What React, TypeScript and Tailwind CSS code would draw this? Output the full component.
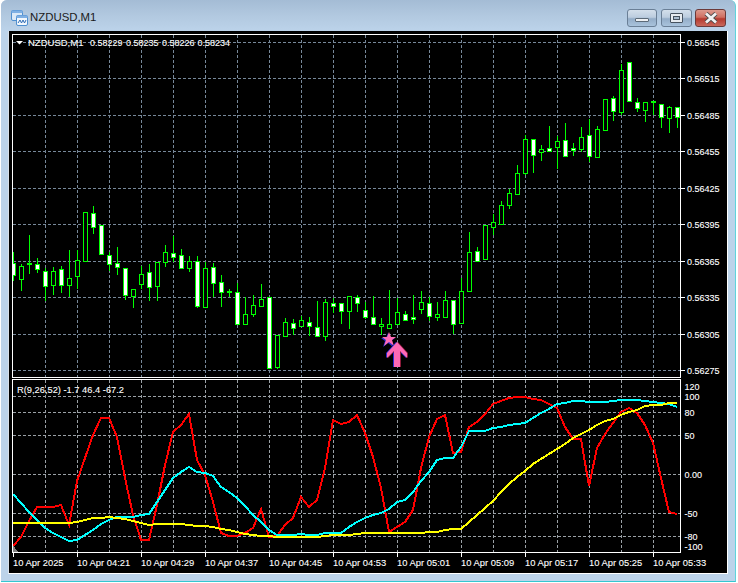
type Candle = [number, number, number, number, boolean];

// wick top, body top, body bottom, wick bottom, white body
const candles: Candle[] = [
  [252, 263, 275, 281, true], [264, 266, 279, 291, false], [235, 263, 264, 274, false], [258, 264, 269, 273, true],
  [268, 271, 286, 301, true], [267, 271, 285, 295, false], [266, 269, 285, 293, true], [250, 278, 285, 297, false],
  [250, 260, 276, 289, false], [212, 212, 261, 261, false], [206, 213, 227, 234, true], [225, 225, 254, 254, true],
  [252, 255, 264, 271, true], [247, 263, 267, 275, true], [268, 268, 295, 300, true], [289, 289, 296, 308, false],
  [266, 274, 284, 289, false], [264, 272, 287, 301, true], [262, 262, 286, 301, false], [245, 252, 262, 267, false],
  [236, 253, 257, 262, true], [249, 255, 268, 269, true], [256, 261, 268, 272, false], [256, 261, 306, 308, true],
  [262, 268, 307, 307, false], [263, 267, 283, 297, true], [275, 282, 292, 307, true], [289, 291, 292, 297, false],
  [283, 292, 324, 324, true], [297, 314, 324, 324, false], [295, 305, 314, 317, false], [284, 299, 306, 306, false],
  [297, 297, 368, 369, true], [335, 335, 367, 369, false], [318, 322, 336, 336, false], [319, 323, 328, 335, true],
  [316, 320, 326, 326, false], [317, 322, 326, 336, true], [301, 327, 336, 336, true], [299, 302, 336, 341, false],
  [298, 303, 306, 313, true], [303, 303, 311, 324, true], [296, 296, 311, 329, false], [295, 297, 303, 312, true],
  [302, 310, 317, 319, true], [296, 317, 324, 324, true], [318, 324, 326, 335, false], [290, 324, 328, 328, false],
  [298, 312, 324, 324, false], [311, 314, 320, 321, true], [295, 317, 319, 324, true], [291, 302, 309, 314, false],
  [297, 303, 316, 321, true], [302, 314, 317, 321, false], [291, 300, 317, 317, false], [300, 300, 324, 334, true],
  [278, 291, 323, 323, false], [232, 252, 291, 291, false], [247, 251, 261, 261, true], [225, 225, 259, 259, false],
  [214, 222, 227, 235, false], [201, 205, 224, 224, false], [189, 193, 205, 209, false], [165, 173, 194, 194, false],
  [135, 139, 173, 175, false], [139, 139, 155, 173, true], [145, 149, 152, 161, false], [126, 148, 151, 152, true],
  [136, 141, 147, 169, false], [123, 140, 156, 156, true], [143, 148, 150, 156, true], [127, 137, 149, 152, false],
  [119, 135, 156, 162, true], [126, 129, 157, 157, false], [99, 99, 130, 130, false], [96, 98, 111, 121, true],
  [64, 70, 112, 115, false], [62, 62, 101, 102, true], [98, 102, 108, 112, true], [102, 102, 110, 122, false],
  [101, 101, 102, 115, false], [104, 104, 117, 128, true], [106, 107, 118, 133, false], [107, 107, 117, 128, true],
];

const red = [
  546, 537, 521, 507, 507, 507, 505, 525, 481, 458, 435, 418, 418, 437, 478, 515, 540, 540, 505, 465, 432, 425, 414,
  460, 475, 502, 533, 536, 536, 533, 528, 509, 537, 536, 525, 518, 497, 507, 500, 468, 420, 424, 422, 415, 433, 457,
  488, 532, 527, 522, 510, 468, 437, 419, 415, 453, 452, 427, 422, 414, 404, 401, 398, 397, 397, 399, 400, 404, 408,
  427, 439, 439, 486, 448, 434, 423, 412, 408, 413, 425, 443, 478, 512, 514,
];

const cyan = [
  494, 503, 512, 520, 528, 533, 537, 541, 540, 535, 530, 524, 520, 517, 517, 517, 515, 514, 502, 490, 478, 472, 467,
  472, 473, 476, 487, 492, 498, 506, 515, 522, 530, 535, 535, 535, 534, 535, 535, 533, 533, 533, 527, 522, 518, 515,
  513, 509, 502, 500, 492, 481, 472, 460, 458, 458, 447, 431, 431, 431, 428, 427, 425, 424, 423, 418, 413, 409, 404,
  403, 401, 401, 402, 402, 402, 401, 400, 400, 400, 401, 402, 403, 404, 407,
];

const yellow = [
  523, 523, 523, 523, 523, 523, 523, 523, 522, 520, 518, 518, 517, 518, 519, 521, 523, 525, 524, 524, 524, 524, 525,
  526, 526, 527, 529, 530, 532, 534, 535, 536, 536, 537, 537, 537, 537, 537, 537, 536, 535, 535, 535, 534, 533, 533,
  533, 533, 533, 533, 533, 533, 532, 532, 530, 529, 529, 522, 515, 508, 501, 492, 484, 477, 471, 464, 459, 454, 449,
  444, 438, 434, 430, 425, 421, 419, 415, 412, 410, 406, 405, 405, 403, 403,
];

const priceLevels = [
  [42, "0.56545"], [78, "0.56515"], [115, "0.56485"], [151, "0.56455"], [188, "0.56425"],
  [224, "0.56395"], [261, "0.56365"], [297, "0.56335"], [334, "0.56305"], [370, "0.56275"],
] as const;

const subGrid = [396, 412, 435, 474, 513, 536];

const subLabels = [
  [386, "120"], [396, "100"], [412, "80"], [435, "50"], [474, "0.00"],
  [513, "-50"], [536, "-80"], [546, "-100"],
] as const;

const timeLabels = [
  [13, "10 Apr 2025"], [77, "10 Apr 04:21"], [141, "10 Apr 04:29"], [205, "10 Apr 04:37"], [269, "10 Apr 04:45"],
  [333, "10 Apr 04:53"], [397, "10 Apr 05:01"], [461, "10 Apr 05:09"], [525, "10 Apr 05:17"], [589, "10 Apr 05:25"],
  [653, "10 Apr 05:33"],
] as const;

const gridX = Array.from({ length: 20 }, (_, i) => 45 + i * 32);
const GRID = "#778899";

function toPoints(values: number[]) {
  return values.map((y, i) => `${13 + i * 8},${y}`).join(" ");
}

function TitleIcon() {
  return (
    <svg width="17" height="16" viewBox="0 0 17 16" className="mr-[2px] shrink-0">
      <rect x="0.5" y="0.5" width="11" height="10" rx="1.5" fill="#dbe9f7" stroke="#4f8fd0" />
      <rect x="0.5" y="0.5" width="11" height="2.5" fill="#7fb0e4" />
      <rect x="5.5" y="5.5" width="11" height="10" rx="1.5" fill="#f3f8fd" stroke="#4f8fd0" />
      <rect x="5.5" y="5.5" width="11" height="2.5" fill="#7fb0e4" />
      <path d="M7 13 L9 10 L10.5 13 L12 10 L13.5 13 L15 10" fill="none" stroke="#2f6db5" />
    </svg>
  );
}

function Minimize() {
  return (
    <div className="flex h-[18px] w-[30px] items-center justify-center rounded-[3px] border border-[#6a7f96] bg-[linear-gradient(#d3dfeb_0%,#bccddf_45%,#94adc8_55%,#a9c3dc_100%)]">
      <div className="mt-[3px] h-[4px] w-[14px] rounded-[1px] border border-[#5c6a78] bg-[#eef1f4]" />
    </div>
  );
}

function Maximize() {
  return (
    <div className="ml-[1px] flex h-[18px] w-[31px] items-center justify-center rounded-[3px] border border-[#6a7f96] bg-[linear-gradient(#d3dfeb_0%,#bccddf_45%,#94adc8_55%,#a9c3dc_100%)]">
      <div className="flex h-[10px] w-[13px] items-center justify-center rounded-[1px] border border-[#46525f] bg-[#e6ebf0]">
        <div className="h-[4px] w-[7px] border border-[#46525f] bg-[#a9bccf]" />
      </div>
    </div>
  );
}

function Close() {
  return (
    <div className="flex h-[18px] w-[31px] items-center justify-center rounded-[3px] border border-[#6b3a3a] bg-[linear-gradient(#dd9a8e_0%,#cf6f62_45%,#b53a2f_55%,#c9685c_100%)]">
      <svg width="16" height="12" viewBox="0 0 16 12">
        <path d="M3 1.5 L13 10.5 M13 1.5 L3 10.5" stroke="#4a4a4a" strokeWidth="4.4" />
        <path d="M3 1.5 L13 10.5 M13 1.5 L3 10.5" stroke="#f2f2f2" strokeWidth="2.8" />
      </svg>
    </div>
  );
}

function Chart() {
  const font = "[font-family:'Liberation_Sans',Arial,sans-serif] fill-white stroke-white stroke-[0.1px]";
  const legendPrices = [
    [90, "0.58229"], [126, "0.58235"], [162, "0.58226"], [197.5, "0.58234"],
  ] as const;
  return (
    <svg width="718" height="542" viewBox="9 31 718 542" className="block bg-black">
      <defs>
        <clipPath id="main-pane">
          <rect x="13" y="35" width="667" height="342" />
        </clipPath>
        <clipPath id="sub-pane">
          <rect x="13" y="380" width="667" height="172" />
        </clipPath>
      </defs>

      <g shapeRendering="crispEdges" stroke={GRID} strokeDasharray="3 2" fill="none">
        {priceLevels.map(([y]) => (
          <line key={y} x1="13" x2="680" y1={y + 0.5} y2={y + 0.5} />
        ))}
        {gridX.map((x) => (
          <line key={x} x1={x + 0.5} x2={x + 0.5} y1="35" y2="377" />
        ))}
        {subGrid.map((y) => (
          <line key={y} x1="13" x2="680" y1={y + 0.5} y2={y + 0.5} stroke="#9aa0a6" />
        ))}
        {gridX.map((x) => (
          <line key={x} x1={x + 0.5} x2={x + 0.5} y1="380" y2="552" stroke="#9aa0a6" />
        ))}
      </g>

      <g clipPath="url(#main-pane)" shapeRendering="crispEdges">
        {candles.map(([wickTop, top, bottom, wickBottom, white], i) => {
          const x = 13 + i * 8;
          return (
            <g key={i}>
              <line x1={x + 0.5} x2={x + 0.5} y1={wickTop} y2={wickBottom} stroke="#00ff00" />
              <rect
                x={x - 1.5}
                y={top + 0.5}
                width="4"
                height={bottom - top}
                fill={white ? "#ffffff" : "#000000"}
                stroke="#00ff00"
              />
            </g>
          );
        })}
      </g>

      {/* signal markers */}
      <polygon points="389,332 391,337 396,337 392,340 394,346 389,342 384,346 386,340 382,337 387,337" fill="#2a2ad0" transform="translate(-1 1)" />
      <polygon points="389,332 391,337 396,337 392,340 394,346 389,342 384,346 386,340 382,337 387,337" fill="#ff69b4" />
      <polygon points="397,342 407,353 407,358 400,351 400,367 394,367 394,351 387,358 387,353" fill="#2a2ad0" transform="translate(-1 0)" />
      <polygon points="397,342 407,353 407,358 400,351 400,367 394,367 394,351 387,358 387,353" fill="#8b1a3a" transform="translate(1 0)" />
      <polygon points="397,342 407,353 407,358 400,351 400,367 394,367 394,351 387,358 387,353" fill="#ff69b4" />

      <g clipPath="url(#sub-pane)" fill="none" strokeWidth="2" shapeRendering="crispEdges">
        <polygon points="13,545 18,552 13,552" fill="#808080" stroke="none" />
        <polyline points={toPoints(red)} stroke="#ff0000" />
        <polyline points={toPoints(cyan)} stroke="#00ffff" />
        <polyline points={toPoints(yellow)} stroke="#ffff00" />
      </g>

      {/* pane frames */}
      <g shapeRendering="crispEdges" stroke="#ffffff" fill="none">
        <rect x="12.5" y="34.5" width="668" height="343" />
        <rect x="12.5" y="379.5" width="668" height="173" />
        {priceLevels.map(([y]) => (
          <line key={y} x1="681" x2="685" y1={y + 0.5} y2={y + 0.5} />
        ))}
        {timeLabels.map(([x]) => (
          <line key={x} x1={x + 0.5} x2={x + 0.5} y1="553" y2="557" />
        ))}
      </g>

      <polygon points="16,41 23,41 19.5,44.5" fill="#ffffff" />
      <text x="28" y="45.5" className={`${font} text-[9.5px]`}>
        NZDUSD,M1
      </text>
      {legendPrices.map(([x, label]) => (
        <text key={x} x={x} y="45.5" className={`${font} text-[9px]`}>
          {label}
        </text>
      ))}
      <text x="17" y="392.5" className={`${font} text-[9.3px]`}>
        R(9,26,52) -1.7 46.4 -67.2
      </text>

      {priceLevels.map(([y, label]) => (
        <text key={y} x="687" y={y + 4} className={`${font} text-[9px]`}>
          {label}
        </text>
      ))}
      {subLabels.map(([y, label]) => (
        <text key={y} x="684.5" y={y + 4} className={`${font} text-[9px]`}>
          {label}
        </text>
      ))}
      {timeLabels.map(([x, label]) => (
        <text key={x} x={x} y="565.5" className={`${font} text-[9.4px]`}>
          {label}
        </text>
      ))}
    </svg>
  );
}

export default function App() {
  return (
    <div className="h-[583px] w-[738px] overflow-hidden bg-white pl-[1px]">
      <div className="flex h-[582px] w-[735px] flex-col rounded-t-[6px] border-r border-b border-r-[#5fd4dc] border-b-[#35c6d0] bg-[#b9d1ea] bg-[linear-gradient(#a4bcd5_0px,#b2c9e0_16px,#bcd3ea_31px)]">
        <div className="flex h-[31px] items-center pt-[9px] pr-[9px] pb-[4px] pl-[10px]">
          <TitleIcon />
          <span className="text-[11.4px] text-[#1a1a1a] [font-family:'Liberation_Sans',Arial,sans-serif]">NZDUSD,M1</span>
          <div className="ml-auto flex gap-[3px]">
            <Minimize />
            <Maximize />
            <Close />
          </div>
        </div>
        <div className="flex-1 pr-[7px] pb-[7px] pl-[7px]">
          <div className="w-[720px] border-b border-l border-r border-white border-l-[#d8dfe8]">
            <Chart />
          </div>
        </div>
      </div>
    </div>
  );
}
